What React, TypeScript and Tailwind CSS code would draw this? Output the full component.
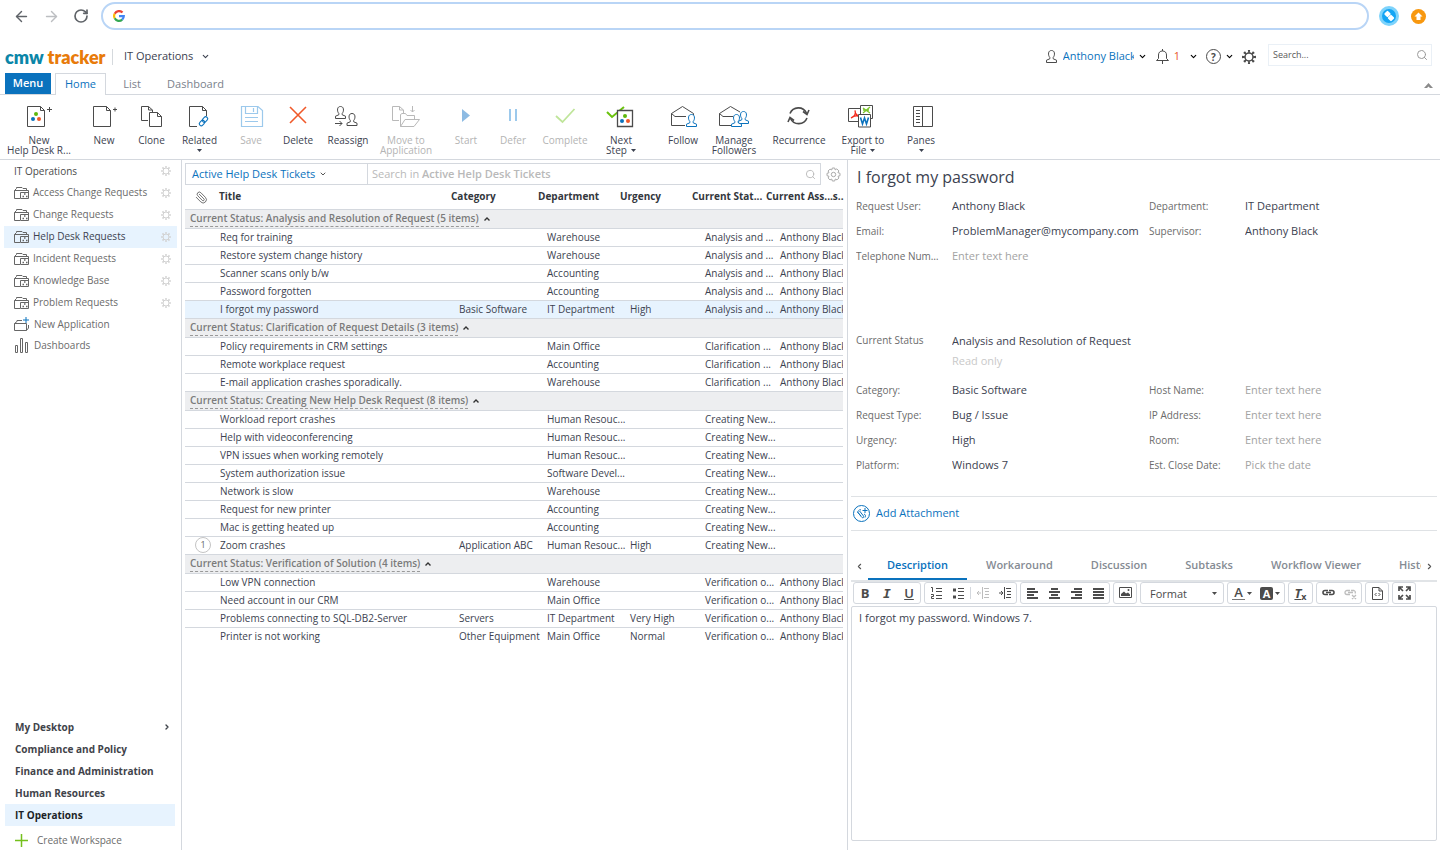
import { useState } from 'react'
import type { ReactNode } from 'react'
import { ArrowLeft, ArrowRight, ChevronDown, ChevronLeft, ChevronRight, Paperclip, RotateCw, Search } from 'lucide-react'

const INK = '#4b4b4b'
const BLUE = '#0a72bd'

type SvgProps = { children: ReactNode; width?: number; height?: number; color?: string }

function Svg({ children, width = 32, height = 24, color = INK }: SvgProps) {
  return (
    <svg width={width} height={height} viewBox={`0 0 ${width} ${height}`} fill="none" stroke={color} className="shrink-0" aria-hidden="true">
      {children}
    </svg>
  )
}

function Gear({ size = 10, stroke = 2, color = '#d2d2d2' }: { size?: number; stroke?: number; color?: string }) {
  const c = size / 2
  return (
    <Svg width={size} height={size} color={color}>
      <circle cx={c} cy={c} r={c - stroke} strokeWidth={stroke / 2} />
      <circle cx={c} cy={c} r={c - stroke / 2} strokeWidth={stroke} pathLength={16} strokeDasharray="0.9 1.1" strokeDashoffset="0.45" />
    </Svg>
  )
}

function Caret({ className = '' }: { className?: string }) {
  return (
    <svg width="5" height="3" viewBox="0 0 5 3" className={`inline-block shrink-0 ${className}`} fill="currentColor" aria-hidden="true">
      <path d="M0 0H5L2.500 3Z" />
    </svg>
  )
}

const Dots = ({ x, y }: { x: number; y: number }) => (
  <g stroke="none">
    <circle cx={x} cy={y} r="2" fill="#5fb80c" />
    <circle cx={x - 3} cy={y + 5} r="2" fill={BLUE} />
    <circle cx={x + 3} cy={y + 5} r="2" fill="#f0592a" />
  </g>
)

const personPath =
  'M0.5 12.5V10.2L3.8 8.8V7.4C2.6 6 2.4 4.6 2.6 2.9C2.9 1.2 4.1 0.5 5.5 0.5S8.1 1.2 8.4 2.9C8.6 4.6 8.4 6 7.2 7.4V8.8L10.5 10.2V12.5Z'

const icons: Record<string, ReactNode> = {
  newTicket: (
    <Svg>
      <path d="M4.500 2.500H17.500L21.500 6.500V22.500H4.500ZM17.500 2.500V6.500H21.500M24 5.500H29M26.500 3V8" />
      <Dots x={13} y={10} />
    </Svg>
  ),
  newDoc: (
    <Svg>
      <path d="M5.500 2.500H18.500L22.500 6.500V22.500H5.500ZM18.500 2.500V6.500H22.500M25 5.500H29M27 3.500V7.500" />
    </Svg>
  ),
  clone: (
    <Svg>
      <path d="M12 16.500H5.500V2.500H12.500L16.500 6V9M12.500 2.500V6H16.500M13.500 8.500H21.500L25.500 12.500V22.500H13.500ZM21.500 8.500V12.500H25.500" />
    </Svg>
  ),
  related: (
    <Svg>
      <path d="M13 22.500H5.500V2.500H18.500L22.500 6.500V12M18.500 2.500V6.500H22.500" />
      <g stroke={BLUE} strokeWidth="1.100">
        <rect x="-3" y="-2" width="6" height="4" rx="2" transform="translate(21 15.500) rotate(-45)" />
        <rect x="-3" y="-2" width="6" height="4" rx="2" transform="translate(18 19) rotate(-45)" />
      </g>
    </Svg>
  ),
  save: (
    <Svg color="#9cc9ec">
      <path d="M6.500 2.500H23L27.500 6.500V22.500H6.500ZM10.500 2.500V9.500H22.500V2.500M18.500 4V8M10 13.500H23M10 17.500H23" strokeWidth="1.200" />
    </Svg>
  ),
  delete: (
    <Svg color="#f0592a">
      <path d="M8 3L24 19M24 3L8 19" strokeWidth="1.600" />
    </Svg>
  ),
  reassign: (
    <Svg>
      <path d={personPath} transform="translate(3 2)" />
      <path d={personPath} transform="translate(14.500 9)" />
      <path d="M3 19.500H10M7.500 17L10 19.500L7.500 22" />
    </Svg>
  ),
  move: (
    <Svg color="#b9b9b9">
      <path d="M9 16.500H2.500V2.500H9.500L13.500 6V9M9.500 2.500V6H13.500M10.500 22.500V10.500L12 9.500H15.500L17 11.500H24.500V15M10.500 22.500H24L29.500 15.500H15L10.500 22.500M22.500 2V8M20.500 6L22.500 8L24.500 6" />
    </Svg>
  ),
  start: (
    <Svg>
      <path d="M12 5L20 11.500L12 18Z" fill="#8dbbe3" stroke="none" />
    </Svg>
  ),
  defer: (
    <Svg color="#9cc9ec">
      <path d="M13 5V17M19 5V17" strokeWidth="2" />
    </Svg>
  ),
  complete: (
    <Svg color="#bfe59a">
      <path d="M7 12L13.500 18L25.500 5" strokeWidth="1.800" />
    </Svg>
  ),
  next: (
    <Svg>
      <path d="M2 8L7 13L19 3" stroke="#6ac20e" strokeWidth="2" />
      <path d="M12.500 6.500H27.500V22.500H12.500Z" fill="#fff" strokeWidth="1.300" />
      <Dots x={20} y={12} />
    </Svg>
  ),
  follow: (
    <Svg>
      <path d="M18 21.500H4.500V9.500L15.500 2.500L26.500 9.500V11M4.500 9.500L8 12.500H19" />
      <path d={personPath} transform="translate(19 10)" fill="#fff" stroke={BLUE} />
    </Svg>
  ),
  manage: (
    <Svg>
      <path d="M13 21.500H1.500V9.500L12.500 2.500L22 8M1.500 9.500L5 12.500H15" />
      <path d={personPath} transform="translate(20 7)" fill="#fff" stroke={BLUE} />
      <path d={personPath} transform="translate(13 10)" fill="#fff" stroke={BLUE} />
    </Svg>
  ),
  recurrence: (
    <Svg>
      <g strokeWidth="1.600">
        <path d="M7 9.500A9 9 0 0 1 23.500 9M24 14A9 9 0 0 1 7.500 14.500" />
        <path d="M20 7.500L24 10.500L26 6M11 16.500L7 13.500L5 18" />
      </g>
    </Svg>
  ),
  export: (
    <Svg>
      <path d="M13.500 1.500H25.500V14.500H13.500Z" fill="#fff" />
      <path d="M16 4L23 9M23 3L16 9M16 6H22" stroke="#7cc52f" strokeWidth="1.300" />
      <path d="M1.500 4.500H13.500V17.500H1.500Z" fill="#fff" />
      <path d="M4 14C8 13 9 9 8 6.500C8 10 11 12.500 13 12.500C10 11.500 6 12 4 14" stroke="#f5291b" strokeWidth="1.300" />
      <path d="M11.500 10.500H23.500V23H11.500Z" fill="#fff" />
      <path d="M13.500 13.500L15.500 20L17.500 14L19.500 20L21.500 13.500" stroke={BLUE} strokeWidth="1.600" />
    </Svg>
  ),
  panes: (
    <Svg>
      <path d="M8.500 2.500H27.500V22.500H8.500ZM17.500 2.500V22.500" />
      <path d="M11 6.500H15M11 9.500H15M11 12.500H15M11 15.500H15M11 18.500H15" />
    </Svg>
  ),
}

type RibbonItem = { icon: string; lines: string[]; box: string; disabled?: boolean; menu?: 'below' | 'inline' }

const ribbon: RibbonItem[] = [
  { icon: 'newTicket', lines: ['New', 'Help Desk R...'], box: 'w-[78px]' },
  { icon: 'newDoc', lines: ['New'], box: 'w-[52px]' },
  { icon: 'clone', lines: ['Clone'], box: 'w-[43px]' },
  { icon: 'related', lines: ['Related'], box: 'w-[53px]', menu: 'below' },
  { icon: 'save', lines: ['Save'], box: 'w-[50px]', disabled: true },
  { icon: 'delete', lines: ['Delete'], box: 'w-[44px]' },
  { icon: 'reassign', lines: ['Reassign'], box: 'w-[56px]' },
  { icon: 'move', lines: ['Move to', 'Application'], box: 'w-[60px]', disabled: true },
  { icon: 'start', lines: ['Start'], box: 'w-[60px]', disabled: true },
  { icon: 'defer', lines: ['Defer'], box: 'w-[34px]', disabled: true },
  { icon: 'complete', lines: ['Complete'], box: 'w-[70px]', disabled: true },
  { icon: 'next', lines: ['Next', 'Step'], box: 'w-[42px]', menu: 'inline' },
  { icon: 'follow', lines: ['Follow'], box: 'ml-4 w-[50px]' },
  { icon: 'manage', lines: ['Manage', 'Followers'], box: 'w-[52px]' },
  { icon: 'recurrence', lines: ['Recurrence'], box: 'w-[78px]' },
  { icon: 'export', lines: ['Export to', 'File'], box: 'w-[50px]', menu: 'inline' },
  { icon: 'panes', lines: ['Panes'], box: 'ml-2 w-[50px]', menu: 'below' },
]

const apps = ['Access Change Requests', 'Change Requests', 'Help Desk Requests', 'Incident Requests', 'Knowledge Base', 'Problem Requests']
const workspaces = ['My Desktop', 'Compliance and Policy', 'Finance and Administration', 'Human Resources', 'IT Operations']

type Ticket = { title: string; category?: string; department: string; urgency?: string; comments?: number }
type Group = { status: string; short: string; assignee: string; tickets: Ticket[] }

const groups: Group[] = [
  {
    status: 'Analysis and Resolution of Request',
    short: 'Analysis and ...',
    assignee: 'Anthony Black',
    tickets: [
      { title: 'Req for training', department: 'Warehouse' },
      { title: 'Restore system change history', department: 'Warehouse' },
      { title: 'Scanner scans only b/w', department: 'Accounting' },
      { title: 'Password forgotten', department: 'Accounting' },
      { title: 'I forgot my password', category: 'Basic Software', department: 'IT Department', urgency: 'High' },
    ],
  },
  {
    status: 'Clarification of Request Details',
    short: 'Clarification ...',
    assignee: 'Anthony Black',
    tickets: [
      { title: 'Policy requirements in CRM settings', department: 'Main Office' },
      { title: 'Remote workplace request', department: 'Accounting' },
      { title: 'E-mail application crashes sporadically.', department: 'Warehouse' },
    ],
  },
  {
    status: 'Creating New Help Desk Request',
    short: 'Creating New...',
    assignee: '',
    tickets: [
      { title: 'Workload report crashes', department: 'Human Resouc...' },
      { title: 'Help with videoconferencing', department: 'Human Resouc...' },
      { title: 'VPN issues when working remotely', department: 'Human Resouc...' },
      { title: 'System authorization issue', department: 'Software Devel...' },
      { title: 'Network is slow', department: 'Warehouse' },
      { title: 'Request for new printer', department: 'Accounting' },
      { title: 'Mac is getting heated up', department: 'Accounting' },
      { title: 'Zoom crashes', category: 'Application ABC', department: 'Human Resouc...', urgency: 'High', comments: 1 },
    ],
  },
  {
    status: 'Verification of Solution',
    short: 'Verification o...',
    assignee: 'Anthony Black',
    tickets: [
      { title: 'Low VPN connection', department: 'Warehouse' },
      { title: 'Need account in our CRM', department: 'Main Office' },
      { title: 'Problems connecting to SQL-DB2-Server', category: 'Servers', department: 'IT Department', urgency: 'Very High' },
      { title: 'Printer is not working', category: 'Other Equipment', department: 'Main Office', urgency: 'Normal' },
    ],
  },
]

function BrowserBar() {
  return (
    <div className="flex h-8 items-center pl-[13px] pr-[14px]">
      <button aria-label="Back" className="w-[30px]"><ArrowLeft size={17} className="text-[#5f6368]" /></button>
      <button aria-label="Forward" className="w-[30px]"><ArrowRight size={17} className="text-[#bcbec1]" /></button>
      <button aria-label="Reload" className="w-[28px]"><RotateCw size={16} className="text-[#5f6368]" strokeWidth={2.500} /></button>
      <div className="flex h-[28px] flex-1 items-center rounded-full border-2 border-[#b9d5f6] pl-[10px]">
        <svg width="12" height="12" viewBox="0 0 12 12" fill="none" strokeWidth="2.200" aria-hidden="true">
          <path d="M9.500 2.600A4.800 4.800 0 0 0 1.700 3.700" stroke="#ea4335" />
          <path d="M1.700 3.700A4.800 4.800 0 0 0 1.700 8.300" stroke="#fbbc05" />
          <path d="M1.700 8.300A4.800 4.800 0 0 0 9.200 9.600" stroke="#34a853" />
          <path d="M9.200 9.600A4.800 4.800 0 0 0 10.800 6.100H6" stroke="#4285f4" />
        </svg>
        <input aria-label="Address" className="ml-2 flex-1 text-[11px] outline-none" />
      </div>
      <button aria-label="Extension" className="ml-[10px]">
        <Svg width={20} height={20} color="none">
          <circle cx="10" cy="10" r="10" fill="#7ed3fb" />
          <circle cx="10" cy="10" r="7" fill="#14a5f4" />
          <rect x="-2.500" y="-2.500" width="5" height="5" rx="1" fill="#fff" transform="translate(8.500 8) rotate(45)" />
          <rect x="-2.500" y="-2.500" width="5" height="5" rx="1" fill="#fff" transform="translate(12 12) rotate(45)" />
        </Svg>
      </button>
      <button aria-label="Update" className="ml-3">
        <Svg width={15} height={15} color="none">
          <circle cx="7.500" cy="7.500" r="7.500" fill="#f8980f" />
          <path d="M7.500 3.500L11.500 7.500H9.500V11H5.500V7.500H3.500Z" fill="#fff" />
        </Svg>
      </button>
    </div>
  )
}

function Header() {
  return (
    <header className="flex h-[41px] items-center pl-[5px] pr-2 pt-2">
      <div className="w-[108px] whitespace-nowrap border-r border-[#d5d9dd] font-[Lato,sans-serif] text-[18px] leading-4 font-extrabold text-[#e87b0a]">
        <span className="text-[#0b86a8]">cmw</span> tracker
      </div>
      <button className="ml-[11px] flex items-center gap-2 text-[11px] text-[#3c4250]">
        IT Operations <ChevronDown size={9} strokeWidth={3} />
      </button>
      <div className="ml-auto flex items-center text-[11px]">
        <button className="flex items-center">
          <Svg width={12} height={14}><path d={personPath} /></Svg>
          <span className="ml-[5px] w-[71px] overflow-hidden whitespace-nowrap text-left text-[#0a72bd]">Anthony Black</span>
          <ChevronDown size={9} strokeWidth={3} className="ml-1" />
        </button>
        <button className="ml-[9px] flex items-center">
          <Svg width={13} height={15}>
            <path d="M0.500 11.500H12.500L10.500 9.500V6C10.500 3.500 9 2 6.500 2S2.500 3.500 2.500 6V9.500ZM6.500 0V2M6.500 12V15" />
          </Svg>
          <span className="ml-[5px] text-[#e8562a]">1</span>
          <ChevronDown size={9} strokeWidth={3} className="ml-[9px]" />
        </button>
        <button className="ml-2 flex items-center" aria-label="Help">
          <span className="flex size-[15px] items-center justify-center rounded-full border border-[#4b4b4b] text-[10px] font-bold leading-none text-[#4b4b4b]">?</span>
          <ChevronDown size={9} strokeWidth={3} className="ml-1" />
        </button>
        <button className="ml-2" aria-label="Settings"><Gear size={14} stroke={3} color={INK} /></button>
      </div>
      <label className="mt-1 ml-3 flex h-[22px] w-[164px] items-center self-start border border-[#eaf0f6] pl-1 pr-[3px]">
        <input aria-label="Search" placeholder="Search..." className="w-0 flex-1 text-[9px] outline-none placeholder:text-[#5a5a5a]" />
        <Search size={12} className="text-[#9a9a9a]" />
      </label>
    </header>
  )
}

function RibbonTabs() {
  return (
    <nav className="flex h-[22px] items-stretch border-b border-[#d4d8de] pl-[5px] pr-[7px] text-[11px] text-[#7b828c]">
      <button className="w-[46px] bg-[#0a72bd] font-semibold text-white">Menu</button>
      <button className="-mb-px ml-1 w-[51px] border border-b-0 border-[#d4d8de] bg-white text-[#0a72bd]">Home</button>
      <button className="w-[52px] pt-px">List</button>
      <button className="w-[75px] pt-px">Dashboard</button>
      <button className="ml-auto self-end pb-[6px]" aria-label="Collapse ribbon">
        <Svg width={9} height={5} color="none"><path d="M0 5L4.500 0L9 5H6L4.500 3.500L3 5Z" fill="#8b8b8b" /></Svg>
      </button>
    </nav>
  )
}

function Ribbon() {
  return (
    <div className="flex h-[65px] items-start border-b border-[#d4d8de] pt-[9px]">
      {ribbon.map((item) => (
        <button
          key={item.icon}
          disabled={item.disabled}
          className={`flex shrink-0 flex-col items-center text-[10px] leading-[10px] ${item.box} ${item.disabled ? 'text-[#b4b4b4]' : 'text-[#3c4250]'}`}
        >
          {icons[item.icon]}
          <span className="mt-[7px] whitespace-nowrap">
            {item.lines.map((line, i) => (
              <span key={line} className="block">
                {line}
                {item.menu === 'inline' && i === 1 && <Caret className="mb-px ml-1" />}
              </span>
            ))}
          </span>
          {item.menu === 'below' && <Caret className="mt-1" />}
        </button>
      ))}
    </div>
  )
}

function AppIcon() {
  return (
    <Svg width={15} height={14} color="#666">
      <path d="M6 12.500H0.500V4.500L2.500 2.500V1.500H8L9 2.500H12.500V4.500M0.500 4.500H14.500V12.500H6.500V6.500H14" />
      <path d="M10 8H11.500M8.500 10.500H10M12 10.500H13.500" strokeWidth="1.500" />
    </Svg>
  )
}

function Sidebar() {
  return (
    <aside className="mb-1 flex flex-col border-r border-[#d4d8de] text-[10px] text-[#6b6b6b]">
      <div className="flex h-[22px] items-center justify-between pl-[14px] pr-[10px] text-[#4b4b4b]">
        IT Operations <Gear />
      </div>
      {apps.map((app) => {
        const active = app === 'Help Desk Requests'
        return (
          <a key={app} href="#" className={`ml-1 mr-1 flex h-[22px] items-center pb-px pl-[10px] pr-[6px] ${active ? 'bg-[#e7f3fe] text-[#3c4250]' : ''}`}>
            <AppIcon />
            <span className="ml-1 flex-1 whitespace-nowrap">{app}</span>
            <Gear />
          </a>
        )
      })}
      <a href="#" className="flex h-[21px] items-center gap-[5px] pb-px pl-[14px]">
        <Svg width={15} height={14} color="#666">
          <path d="M0.500 6.500H12.500V13.500H0.500ZM0.500 6.500L3 4.500V3.500H8M12.500 13.500L14.500 11V8" />
          <path d="M12 0V6M9 3H15" stroke={BLUE} />
        </Svg>
        New Application
      </a>
      <a href="#" className="flex h-[22px] items-center gap-[5px] pb-px pl-[14px]">
        <Svg width={15} height={15} color="#666">
          <path d="M1.500 7.500H3.500V14.500H1.500ZM6.500 0.500H8.500V14.500H6.500ZM11.500 4.500H13.500V14.500H11.500Z" />
        </Svg>
        Dashboards
      </a>
      <div className="mt-auto font-bold text-[#3f434a]">
        {workspaces.map((name) => (
          <a
            key={name}
            href="#"
            className={`ml-[5px] mr-[6px] flex h-[22px] items-center justify-between pl-[10px] pr-1 ${name === 'IT Operations' ? 'bg-[#e7f3fe] text-[#1c1f26]' : ''}`}
          >
            {name}
            {name === 'My Desktop' && <ChevronRight size={8} strokeWidth={4} />}
          </a>
        ))}
      </div>
      <button className="flex h-[24px] items-center gap-[9px] pl-[15px] pt-1">
        <Svg width={13} height={13} color="#74c01c"><path d="M6.500 0V13M0 6.500H13" strokeWidth="1.500" /></Svg>
        Create Workspace
      </button>
    </aside>
  )
}

function TicketList() {
  const [selected, setSelected] = useState('I forgot my password')

  return (
    <section className="mb-1 overflow-hidden border-r border-[#d4d8de] pl-[3px] pr-1">
      <div className="flex h-[28px] items-center">
        <div className="flex h-[22px] flex-1 items-center border border-[#d4d8de] text-[11px]">
          <button className="flex h-full w-[182px] items-center gap-1 border-r border-[#d4d8de] pl-[6px] text-[#0a72bd]">
            Active Help Desk Tickets <ChevronDown size={8} strokeWidth={3} className="text-[#555]" />
          </button>
          <label className="relative flex h-full flex-1 items-center pl-1 pr-1 text-[#b9b9b9]">
            <span className="flex-1">Search in <b className="font-semibold">Active Help Desk Tickets</b></span>
            <input aria-label="Search tickets" className="absolute inset-0 bg-transparent pl-1 outline-none" />
            <Search size={11} />
          </label>
        </div>
        <button aria-label="List settings" className="ml-[5px] mr-[2px]">
          <Svg width={15} height={15} color="#a9a9a9">
            <circle cx="7.500" cy="7.500" r="2.200" />
            <path d="M6.300 1H8.700L9.200 2.900L10.800 1.900L12.900 3.900L11.900 5.600L14 6.300V8.700L12 9.300L12.900 11L11 12.900L9.300 12L8.700 14H6.300L5.700 12L4 12.900L2.100 11L3 9.300L1 8.700V6.300L3 5.700L2.100 4L4 2.100L5.700 3Z" />
          </Svg>
        </button>
      </div>
      <table className="w-full table-fixed border-collapse text-left text-[10px] leading-3 text-[#3c4250]">
        <colgroup>
          <col className="w-[34px]" />
          <col />
          <col className="w-[87px]" />
          <col className="w-[82px]" />
          <col className="w-[72px]" />
          <col className="w-[74px]" />
          <col className="w-[77px]" />
        </colgroup>
        <thead>
          <tr className="h-[21px] whitespace-nowrap border-b border-[#d4d8de] font-bold text-[#33373d]">
            <th className="pb-[2px] pl-[10px]" aria-label="Attachments"><Paperclip size={13} strokeWidth={1.500} className="-scale-x-100 text-[#555]" /></th>
            <th className="pb-1">Title</th>
            <th className="pb-1">Category</th>
            <th className="pb-1">Department</th>
            <th className="pb-1">Urgency</th>
            <th className="pb-1">Current Stat...</th>
            <th className="pb-1">Current Ass...s..</th>
          </tr>
        </thead>
        {groups.map((group) => (
          <tbody key={group.status}>
            <tr className="h-[19px] border-b border-[#d4d8de] bg-[#edeef0]">
              <td colSpan={7} className="pl-[5px] pt-px">
                <button className="flex items-center gap-[5px] font-semibold text-[#7b7b7b]">
                  <span className="border-b border-dashed border-[#999] leading-[15px]">
                    Current Status: {group.status} ({group.tickets.length} items)
                  </span>
                  <Svg width={6} height={4} color="#333"><path d="M0.500 3.500L3 1L5.500 3.500" strokeWidth="1.400" /></Svg>
                </button>
              </td>
            </tr>
            {group.tickets.map((t) => (
              <tr
                key={t.title}
                onClick={() => setSelected(t.title)}
                className={`h-[18px] whitespace-nowrap border-b border-[#d4d8de] ${t.title === selected ? 'bg-[#e7f3fe]' : ''} ${t.title === 'Printer is not working' ? 'border-b-0' : ''}`}
              >
                <td className="pl-[10px]">
                  {t.comments && (
                    <span className="flex size-4 items-center justify-center rounded-full border border-[#c4c4c4] bg-white text-[9px] text-[#666]">{t.comments}</span>
                  )}
                </td>
                <td className="pl-px">{t.title}</td>
                <td className="pl-2">{t.category}</td>
                <td className="pl-[9px]">{t.department}</td>
                <td className="pl-[10px]">{t.urgency}</td>
                <td className="pl-[13px]">{group.short}</td>
                <td className="overflow-hidden pl-[14px]">{group.assignee}</td>
              </tr>
            ))}
          </tbody>
        ))}
      </table>
    </section>
  )
}

function Field({ id, label, value, placeholder }: { id: string; label: string; value?: string; placeholder?: string }) {
  return (
    <>
      <label htmlFor={id} className="truncate pr-3 text-[10px] text-[#6b6b6b]">{label}</label>
      <input
        id={id}
        defaultValue={value}
        placeholder={placeholder}
        className="w-full min-w-0 bg-transparent text-[11px] text-[#3c4250] outline-none placeholder:text-[#a3a3a3]"
      />
    </>
  )
}

const fieldGrid = 'grid auto-rows-[25px] grid-cols-[96px_197px_96px_minmax(0,1fr)] items-center pl-[5px]'

const toolIcons: Record<string, ReactNode> = {
  'Numbered list': <path d="M6 2.500H12M6 5.500H12M6 9.500H12M6 12.500H12M1 1.500H2.500V6M1 8.500H3.500V10.500H1.500V12.500H4" />,
  'Bulleted list': (
    <>
      <path d="M6 2.500H12M6 5.500H12M6 9.500H12M6 12.500H12" />
      <path d="M1 4H4M1 11H4" strokeWidth="3" />
    </>
  ),
  Outdent: <path d="M7 2.500H12M8 5.500H12M8 8.500H12M7 11.500H12M5.500 1V13M4 7H0M2 5L0 7L2 9" />,
  Indent: <path d="M7 2.500H12M8 5.500H12M8 8.500H12M7 11.500H12M5.500 1V13M0 7H4M2 5L4 7L2 9" />,
  'Align left': <path d="M1 3H9M1 6H12M1 9H8M1 12H12" strokeWidth="2" />,
  'Align center': <path d="M3 3H10M1 6H12M3 9H10M1 12H12" strokeWidth="2" />,
  'Align right': <path d="M4 3H12M1 6H12M5 9H12M1 12H12" strokeWidth="2" />,
  Justify: <path d="M1 3H12M1 6H12M1 9H12M1 12H12" strokeWidth="2" />,
  Image: (
    <>
      <path d="M0.500 1.500H12.500V11.500H0.500Z" />
      <path d="M2 10V8L5 5.500L7 7.500L9 6.500L11 8.500V10Z" fill={INK} stroke="none" />
      <circle cx="9.500" cy="4" r="1" fill={INK} stroke="none" />
    </>
  ),
  Link: <path d="M6 4.500H3A2 2 0 0 0 3 8.500H6M7 4.500H10A2 2 0 0 1 10 8.500H7M4 6.500H9" strokeWidth="1.600" />,
  Unlink: <path d="M6 4.500H3A2 2 0 0 0 3 8.500H6M7 4.500H10A2 2 0 0 1 11 7.500M4 6.500H9M8 9L12 13M12 9L8 13" strokeWidth="1.300" />,
  Source: <path d="M1.500 1.500H8L11.500 5V13.500H1.500ZM8 1.500V5H11.500M5.500 7L4 8.500L5.500 10M7.500 7L9 8.500L7.500 10" />,
  Maximize: <path d="M1 5V1H5M1 1L5 5M8 1H12V5M12 1L8 5M1 9V13H5M1 13L5 9M12 9V13H8M12 13L8 9" strokeWidth="1.700" />,
}

function Tool({ name, muted }: { name: string; muted?: boolean }) {
  return (
    <button aria-label={name} className="flex w-[22px] items-center justify-center">
      <Svg width={13} height={14} color={muted ? '#bdbdbd' : INK}>{toolIcons[name]}</Svg>
    </button>
  )
}

function ToolGroup({ children }: { children: ReactNode }) {
  return <div className="flex h-[22px] items-stretch rounded-[3px] border border-[#d4d8de] text-[13px] leading-none text-[#4b4b4b]">{children}</div>
}

function Toolbar() {
  return (
    <div className="flex gap-[3px] pl-[2px]">
      <ToolGroup>
        <button className="w-[22px] font-bold">B</button>
        <button className="w-[22px] font-['DejaVu_Sans_Mono',monospace] font-bold italic">I</button>
        <button className="w-[22px] font-semibold underline">U</button>
      </ToolGroup>
      <ToolGroup>
        <Tool name="Numbered list" />
        <Tool name="Bulleted list" />
        <span className="mx-px my-1 w-px bg-[#d4d8de]" />
        <Tool name="Outdent" muted />
        <Tool name="Indent" />
      </ToolGroup>
      <ToolGroup>
        <Tool name="Align left" />
        <Tool name="Align center" />
        <Tool name="Align right" />
        <Tool name="Justify" />
      </ToolGroup>
      <ToolGroup><Tool name="Image" /></ToolGroup>
      <ToolGroup>
        <label className="flex w-[82px] items-center pr-[6px]">
          <select aria-label="Format" className="w-0 flex-1 appearance-none bg-transparent pl-[9px] text-[11px] outline-none">
            <option>Format</option>
          </select>
          <Caret />
        </label>
      </ToolGroup>
      <ToolGroup>
        <button aria-label="Text color" className="flex w-[28px] items-center justify-center gap-[2px]">
          <span className="border-b border-[#777] px-[2px] font-semibold">A</span><Caret />
        </button>
        <button aria-label="Background color" className="flex w-[28px] items-center justify-center gap-[2px]">
          <span className="rounded-[2px] bg-[#4b4b4b] px-[3px] text-[11px] leading-[13px] font-bold text-white">A</span><Caret />
        </button>
      </ToolGroup>
      <ToolGroup>
        <button aria-label="Remove format" className="w-[23px] font-bold">
          <i className="underline">T</i><sub className="text-[9px]">x</sub>
        </button>
      </ToolGroup>
      <ToolGroup>
        <Tool name="Link" />
        <Tool name="Unlink" muted />
      </ToolGroup>
      <ToolGroup><Tool name="Source" /></ToolGroup>
      <ToolGroup><Tool name="Maximize" /></ToolGroup>
    </div>
  )
}

const tabs = ['Description', 'Workaround', 'Discussion', 'Subtasks', 'Workflow Viewer', 'History']

function TicketDetail() {
  const [tab, setTab] = useState('Description')

  return (
    <section className="flex min-w-0 flex-col pb-[13px] pl-[3px] pr-[3px]">
      <h1 className="h-[34px] pl-[6px] text-[16px] leading-[34px] text-[#3c4250]">I forgot my password</h1>
      <div className={fieldGrid}>
        <Field id="user" label="Request User:" value="Anthony Black" />
        <Field id="department" label="Department:" value="IT Department" />
        <Field id="email" label="Email:" value="ProblemManager@mycompany.com" />
        <Field id="supervisor" label="Supervisor:" value="Anthony Black" />
        <Field id="phone" label="Telephone Number:" placeholder="Enter text here" />
      </div>
      <div className="mt-[59px] grid grid-cols-[96px_minmax(0,1fr)] items-center pl-[5px]">
        <label htmlFor="status" className="text-[10px] text-[#6b6b6b]">Current Status</label>
        <input id="status" readOnly defaultValue="Analysis and Resolution of Request" className="h-[25px] text-[11px] text-[#3c4250] outline-none" />
        <p className="col-start-2 text-[11px] leading-[15px] text-[#c9c9c9]">Read only</p>
      </div>
      <div className={`mt-[10px] ${fieldGrid}`}>
        <Field id="category" label="Category:" value="Basic Software" />
        <Field id="host" label="Host Name:" placeholder="Enter text here" />
        <Field id="type" label="Request Type:" value="Bug / Issue" />
        <Field id="ip" label="IP Address:" placeholder="Enter text here" />
        <Field id="urgency" label="Urgency:" value="High" />
        <Field id="room" label="Room:" placeholder="Enter text here" />
        <Field id="platform" label="Platform:" value="Windows 7" />
        <Field id="close" label="Est. Close Date:" placeholder="Pick the date" />
      </div>
      <div className="mt-[18px] flex h-[35px] items-center border-y border-[#dfe2e5] pl-[2px]">
        <button className="flex items-center gap-[6px] text-[11px] text-[#0a72bd]">
          <Svg width={17} height={17} color={BLUE}>
            <circle cx="8.500" cy="8.500" r="8" />
            <path d="M4.500 7L8.500 12C9.500 13.500 11.500 12.500 10.500 11L7 6.500C6 5 4 6 5 7.500L8 11M12 3V8M9.500 5.500H14.500" />
            <path d="M11 9C12.500 9.500 13 11 12 12.500M8 5L6.500 4.500" />
          </Svg>
          Add Attachment
        </button>
      </div>
      <div className="mt-[22px] flex h-[29px] items-stretch border-b-2 border-[#e1e4e7] text-[11px] font-semibold text-[#858b93]">
        <button aria-label="Previous tabs" className="w-[17px] pl-1 text-[#555]"><ChevronLeft size={9} strokeWidth={3} /></button>
        <div className="flex min-w-0 flex-1 overflow-hidden">
          {tabs.map((name) => (
            <button
              key={name}
              onClick={() => setTab(name)}
              className={`shrink-0 border-b-2 px-[19px] ${name === tab ? 'border-[#0a72bd] text-[#0a72bd]' : 'border-transparent'}`}
            >
              {name}
            </button>
          ))}
        </div>
        <button aria-label="Next tabs" className="w-4 pl-1 text-[#555]"><ChevronRight size={9} strokeWidth={3} /></button>
      </div>
      <Toolbar />
      <textarea
        aria-label="Description"
        defaultValue="I forgot my password. Windows 7."
        className="mt-[2px] flex-1 resize-none rounded-[2px] border border-[#d4d8de] px-[7px] py-[3px] text-[11px] leading-[15px] text-[#3c4250] outline-none"
      />
    </section>
  )
}

export default function App() {
  return (
    <div className="flex min-h-screen flex-col overflow-hidden bg-white font-['Open_Sans',sans-serif]">
      <BrowserBar />
      <Header />
      <RibbonTabs />
      <Ribbon />
      <main className="grid flex-1 grid-cols-[182px_minmax(0,666fr)_minmax(0,592fr)]">
        <Sidebar />
        <TicketList />
        <TicketDetail />
      </main>
    </div>
  )
}
